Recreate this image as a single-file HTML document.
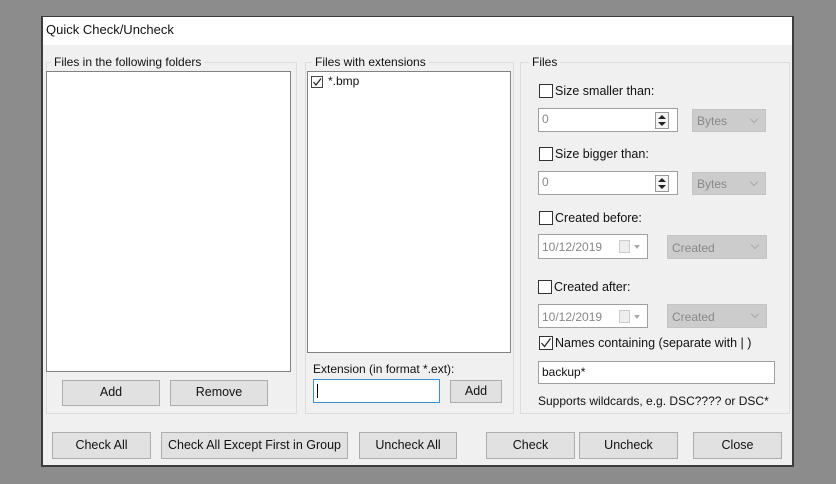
<!DOCTYPE html>
<html><head><meta charset="utf-8"><style>
*{box-sizing:border-box;margin:0;padding:0}
body{width:836px;height:484px;background:#8c8c8c;position:relative;overflow:hidden;font-family:"Liberation Sans",sans-serif;font-size:12px;color:#111}
.a{position:absolute}
.win{left:41px;top:16px;width:753px;height:451px;background:#f0f0f0;border:2px solid #3c3c3c;border-top-width:1px}
.title{left:43px;top:17px;width:749px;height:28px;background:#fff;font-size:13px;padding:5px 0 0 3px}
.grp{border:1px solid #dcdcdc;}
.lbl{background:#f0f0f0;padding:0 3px;white-space:nowrap}
.list{background:#fff;border:1px solid #828282}
.btn{background:#e1e1e1;border:1px solid #adadad;text-align:center;line-height:23px;font-size:12.5px;white-space:nowrap}
.cb{width:14px;height:14px;border:1px solid #333;background:#fff}
.inp{background:#fff;border:1px solid #a0a0a0;color:#888;padding:3px 0 0 3px}
.combo{background:#cccccc;border:1px solid #c4c4c4;color:#888;padding:4px 0 0 4px}
.combo:after{content:"";position:absolute;right:8px;top:6px;width:5px;height:5px;border-right:1px solid #aaa;border-bottom:1px solid #aaa;transform:rotate(45deg)}
</style></head><body>
<div class="a win"></div>
<div class="a title">Quick Check/Uncheck</div>

<div class="a grp" style="left:46px;top:62px;width:251px;height:352px"></div>
<div class="a lbl" style="left:51px;top:55px">Files in the following folders</div>
<div class="a list" style="left:46px;top:71px;width:245px;height:301px"></div>
<div class="a btn" style="left:62px;top:380px;width:98px;height:26px">Add</div>
<div class="a btn" style="left:170px;top:380px;width:98px;height:26px">Remove</div>

<div class="a grp" style="left:305px;top:62px;width:209px;height:352px"></div>
<div class="a lbl" style="left:312px;top:55px">Files with extensions</div>
<div class="a list" style="left:307px;top:71px;width:204px;height:282px"></div>
<div class="a" style="left:311px;top:76px;width:12px;height:12px;border:1px solid #444;background:#fff"><svg width="10" height="10" style="position:absolute;left:0;top:0"><path d="M1.5 5 L4 8 L9 1.5" stroke="#222" stroke-width="1.2" fill="none"/></svg></div>
<div class="a" style="left:328px;top:74px">*.bmp</div>
<div class="a" style="left:313px;top:362px">Extension (in format *.ext):</div>
<div class="a" style="left:313px;top:379px;width:127px;height:24px;background:#fff;border:1px solid #3a8fd6"><div class="a" style="left:3px;top:4px;width:1px;height:14px;background:#000"></div></div>
<div class="a btn" style="left:450px;top:380px;width:52px;height:23px;line-height:21px">Add</div>

<div class="a grp" style="left:520px;top:62px;width:270px;height:352px"></div>
<div class="a lbl" style="left:529px;top:55px">Files</div>

<div class="a cb" style="left:539px;top:84px"></div>
<div class="a" style="left:555px;top:84px;font-size:12.5px">Size smaller than:</div>
<div class="a inp" style="left:538px;top:108px;width:140px;height:24px">0</div>
<div class="a" style="left:655px;top:112px;width:14px;height:17px"><svg width="14" height="17"><rect x="0.5" y="0.5" width="13" height="16" fill="#f4f4f4" stroke="#999"/><path d="M3 7 L7 3 L11 7Z M3 10 L7 14 L11 10Z" fill="#222"/></svg></div>
<div class="a combo" style="left:692px;top:109px;width:74px;height:23px">Bytes</div>

<div class="a cb" style="left:539px;top:147px"></div>
<div class="a" style="left:555px;top:147px;font-size:12.5px">Size bigger than:</div>
<div class="a inp" style="left:538px;top:171px;width:140px;height:24px">0</div>
<div class="a" style="left:655px;top:175px;width:14px;height:17px"><svg width="14" height="17"><rect x="0.5" y="0.5" width="13" height="16" fill="#f4f4f4" stroke="#999"/><path d="M3 7 L7 3 L11 7Z M3 10 L7 14 L11 10Z" fill="#222"/></svg></div>
<div class="a combo" style="left:692px;top:172px;width:74px;height:23px">Bytes</div>

<div class="a cb" style="left:539px;top:211px"></div>
<div class="a" style="left:555px;top:211px;font-size:12.5px">Created before:</div>
<div class="a inp" style="left:538px;top:234px;width:110px;height:25px;padding-top:5px">10/12/2019<div class="a" style="left:80px;top:5px;width:11px;height:13px;border:1px solid #ccc;background:#eee"></div><div class="a" style="left:95px;top:10px;border:3px solid transparent;border-top:4px solid #aaa"></div></div>
<div class="a combo" style="left:667px;top:235px;width:100px;height:24px;padding-top:5px">Created</div>

<div class="a cb" style="left:538px;top:280px"></div>
<div class="a" style="left:554px;top:280px;font-size:12.5px">Created after:</div>
<div class="a inp" style="left:538px;top:304px;width:110px;height:24px;padding-top:5px">10/12/2019<div class="a" style="left:80px;top:5px;width:11px;height:13px;border:1px solid #ccc;background:#eee"></div><div class="a" style="left:95px;top:10px;border:3px solid transparent;border-top:4px solid #aaa"></div></div>
<div class="a combo" style="left:667px;top:304px;width:100px;height:24px;padding-top:5px">Created</div>

<div class="a cb" style="left:539px;top:336px"><svg width="12" height="12" style="position:absolute;left:0;top:0"><path d="M1.5 6 L4.5 9.5 L10.5 1.5" stroke="#222" stroke-width="1.2" fill="none"/></svg></div>
<div class="a" style="left:555px;top:336px;font-size:12.5px">Names containing (separate with | )</div>
<div class="a inp" style="left:538px;top:361px;width:237px;height:23px;color:#111">backup*</div>
<div class="a" style="left:538px;top:394px;font-size:12px">Supports wildcards, e.g. DSC???? or DSC*</div>

<div class="a btn" style="left:52px;top:432px;width:99px;height:27px;line-height:25px">Check All</div>
<div class="a btn" style="left:161px;top:432px;width:187px;height:27px;line-height:25px">Check All Except First in Group</div>
<div class="a btn" style="left:359px;top:432px;width:98px;height:27px;line-height:25px">Uncheck All</div>
<div class="a btn" style="left:486px;top:432px;width:89px;height:27px;line-height:25px">Check</div>
<div class="a btn" style="left:579px;top:432px;width:99px;height:27px;line-height:25px">Uncheck</div>
<div class="a btn" style="left:693px;top:432px;width:89px;height:27px;line-height:25px">Close</div>
</body></html>
